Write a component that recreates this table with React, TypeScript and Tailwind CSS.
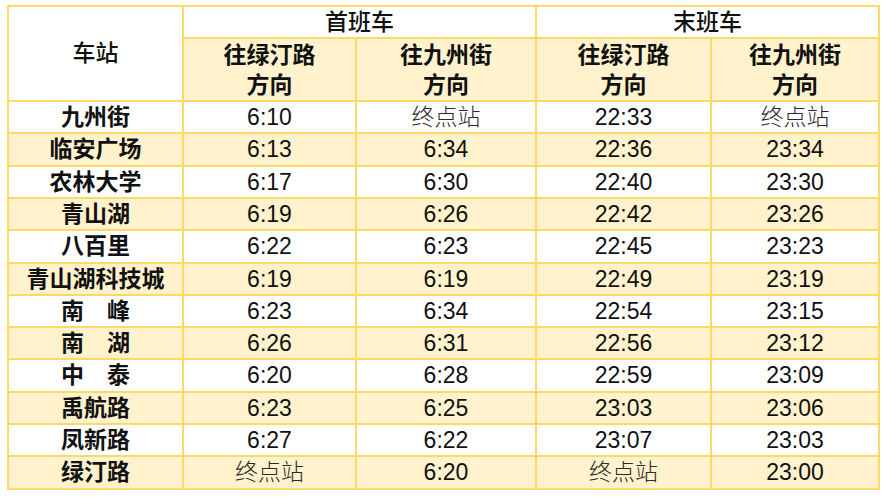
const rows: { name: string; times: string[]; h: string }[] = [
  { name: "九州街", times: ["6:10", "终点站", "22:33", "终点站"], h: "h-[30px]" },
  { name: "临安广场", times: ["6:13", "6:34", "22:36", "23:34"], h: "h-[31px]" },
  { name: "农林大学", times: ["6:17", "6:30", "22:40", "23:30"], h: "h-[30px]" },
  { name: "青山湖", times: ["6:19", "6:26", "22:42", "23:26"], h: "h-[30px]" },
  { name: "八百里", times: ["6:22", "6:23", "22:45", "23:23"], h: "h-[31px]" },
  { name: "青山湖科技城", times: ["6:19", "6:19", "22:49", "23:19"], h: "h-[30px]" },
  { name: "南\u3000峰", times: ["6:23", "6:34", "22:54", "23:15"], h: "h-[30px]" },
  { name: "南\u3000湖", times: ["6:26", "6:31", "22:56", "23:12"], h: "h-[30px]" },
  { name: "中\u3000泰", times: ["6:20", "6:28", "22:59", "23:09"], h: "h-[31px]" },
  { name: "禹航路", times: ["6:23", "6:25", "23:03", "23:06"], h: "h-[30px]" },
  { name: "凤新路", times: ["6:27", "6:22", "23:07", "23:03"], h: "h-[30px]" },
  { name: "绿汀路", times: ["终点站", "6:20", "终点站", "23:00"], h: "h-[31px]" },
];

function Cell({ value, bg }: { value: string; bg: string }) {
  const terminal = value === "终点站";
  return (
    <div
      className={`${bg} flex items-center justify-center ${
        terminal ? "font-light text-[#2a2a2a]" : "text-[#111]"
      }`}
    >
      {value}
    </div>
  );
}

export default function App() {
  return (
    <div
      className="min-h-[498px] w-[886px] bg-white pl-[7px] pt-[5px] text-[23px] leading-none text-[#111]"
      style={{ fontFamily: '"Liberation Sans", "Noto Sans CJK SC", sans-serif' }}
    >
      <div className="grid w-[873px] grid-cols-[173px_171px_178px_173px_166px] gap-[2px] bg-[#ffd966] p-[2px]">
        {/* header */}
        <div className="row-span-2 flex items-center justify-center bg-white font-medium">车站</div>
        <div className="col-span-2 flex h-[30px] items-center justify-center bg-white font-medium">首班车</div>
        <div className="col-span-2 flex h-[30px] items-center justify-center bg-white font-medium">末班车</div>
        {["往绿汀路", "往九州街", "往绿汀路", "往九州街"].map((dir, i) => (
          <div
            key={i}
            className="flex h-[61px] flex-col items-center justify-center bg-[#fff2cc] font-semibold leading-[30px]"
          >
            <span>{dir}</span>
            <span>方向</span>
          </div>
        ))}

        {/* stations */}
        {rows.map((row, i) => {
          const bg = i % 2 === 0 ? "bg-white" : "bg-[#fff2cc]";
          return [
            <div key={row.name} className={`${bg} ${row.h} flex items-center justify-center font-semibold`}>
              {row.name}
            </div>,
            ...row.times.map((t, j) => <Cell key={`${row.name}-${j}`} value={t} bg={bg} />),
          ];
        })}
      </div>
    </div>
  );
}
